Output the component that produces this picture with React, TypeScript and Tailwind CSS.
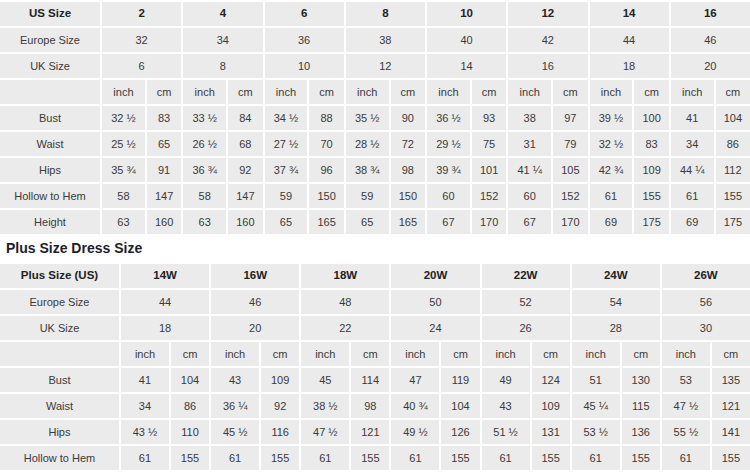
const font = { fontFamily: '"Liberation Sans", Arial, sans-serif' };

type Row = { label: string; values: string[] };

const usSizes = ["2", "4", "6", "8", "10", "12", "14", "16"];
const usEurope = ["32", "34", "36", "38", "40", "42", "44", "46"];
const usUk = ["6", "8", "10", "12", "14", "16", "18", "20"];
const usRows: Row[] = [
  { label: "Bust", values: ["32 ½", "83", "33 ½", "84", "34 ½", "88", "35 ½", "90", "36 ½", "93", "38", "97", "39 ½", "100", "41", "104"] },
  { label: "Waist", values: ["25 ½", "65", "26 ½", "68", "27 ½", "70", "28 ½", "72", "29 ½", "75", "31", "79", "32 ½", "83", "34", "86"] },
  { label: "Hips", values: ["35 ¾", "91", "36 ¾", "92", "37 ¾", "96", "38 ¾", "98", "39 ¾", "101", "41 ¼", "105", "42 ¾", "109", "44 ¼", "112"] },
  { label: "Hollow to Hem", values: ["58", "147", "58", "147", "59", "150", "59", "150", "60", "152", "60", "152", "61", "155", "61", "155"] },
  { label: "Height", values: ["63", "160", "63", "160", "65", "165", "65", "165", "67", "170", "67", "170", "69", "175", "69", "175"] },
];

const plusSizes = ["14W", "16W", "18W", "20W", "22W", "24W", "26W"];
const plusEurope = ["44", "46", "48", "50", "52", "54", "56"];
const plusUk = ["18", "20", "22", "24", "26", "28", "30"];
const plusRows: Row[] = [
  { label: "Bust", values: ["41", "104", "43", "109", "45", "114", "47", "119", "49", "124", "51", "130", "53", "135"] },
  { label: "Waist", values: ["34", "86", "36 ¼", "92", "38 ½", "98", "40 ¾", "104", "43", "109", "45 ¼", "115", "47 ½", "121"] },
  { label: "Hips", values: ["43 ½", "110", "45 ½", "116", "47 ½", "121", "49 ½", "126", "51 ½", "131", "53 ½", "136", "55 ½", "141"] },
  { label: "Hollow to Hem", values: ["61", "155", "61", "155", "61", "155", "61", "155", "61", "155", "61", "155", "61", "155"] },
];

function Cell({ children, bold, span }: { children?: React.ReactNode; bold?: boolean; span?: boolean }) {
  return (
    <div
      className={
        "h-[24px] bg-[#ebebeb] flex items-center justify-center whitespace-nowrap " +
        (span ? "col-span-2 " : "") +
        (bold ? "font-bold text-[11.5px] text-[#222]" : "text-[11px] text-[#3a3a3a]")
      }
    >
      {children}
    </div>
  );
}

function SizeTable({
  head,
  sizes,
  europe,
  uk,
  rows,
  cols,
}: {
  head: string;
  sizes: string[];
  europe: string[];
  uk: string[];
  rows: Row[];
  cols: string;
}) {
  return (
    <div className={"grid gap-[2px] pt-[2px] " + cols}>
      <Cell bold>{head}</Cell>
      {sizes.map((s) => (
        <Cell key={s} bold span>
          {s}
        </Cell>
      ))}
      <Cell>Europe Size</Cell>
      {europe.map((s, i) => (
        <Cell key={i} span>
          {s}
        </Cell>
      ))}
      <Cell>UK Size</Cell>
      {uk.map((s, i) => (
        <Cell key={i} span>
          {s}
        </Cell>
      ))}
      <Cell />
      {sizes.map((s) => [<Cell key={s + "i"}>inch</Cell>, <Cell key={s + "c"}>cm</Cell>])}
      {rows.map((r) => [
        <Cell key={r.label}>{r.label}</Cell>,
        ...r.values.map((v, i) => <Cell key={r.label + i}>{v}</Cell>),
      ])}
    </div>
  );
}

export default function App() {
  return (
    <div className="w-[750px] h-[472px] overflow-hidden bg-white" style={font}>
      <SizeTable
        head="US Size"
        sizes={usSizes}
        europe={usEurope}
        uk={usUk}
        rows={usRows}
        cols="grid-cols-[100px_repeat(8,45fr_36fr)]"
      />
      <div className="h-[28px] leading-[28px] pl-[6px] text-[14px] font-bold text-[#1e1e2a]">Plus Size Dress Size</div>
      <SizeTable
        head="Plus Size (US)"
        sizes={plusSizes}
        europe={plusEurope}
        uk={plusUk}
        rows={plusRows}
        cols="grid-cols-[119px_repeat(7,49fr_39fr)]"
      />
    </div>
  );
}
